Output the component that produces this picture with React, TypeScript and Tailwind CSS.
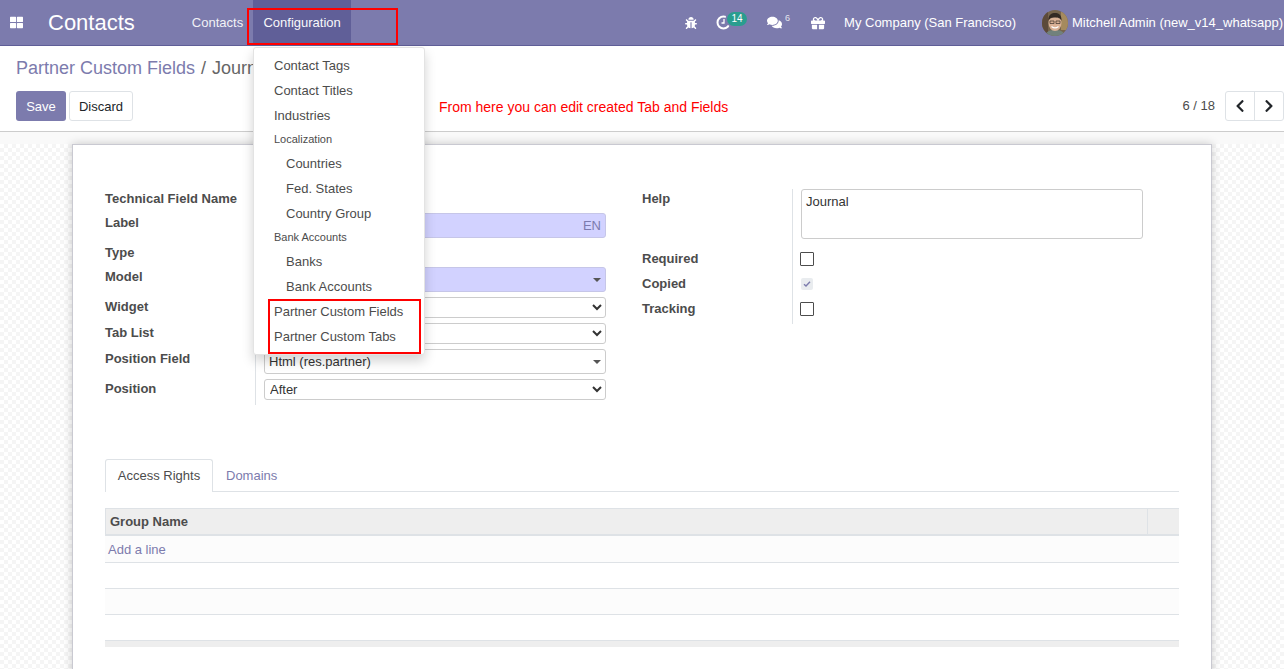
import { FaBug, FaChevronLeft, FaChevronRight, FaComments, FaGift, FaThLarge } from 'react-icons/fa';

const menuItems = [
    { label: 'Contact Tags' },
    { label: 'Contact Titles' },
    { label: 'Industries' },
    { label: 'Localization', header: true },
    { label: 'Countries', sub: true },
    { label: 'Fed. States', sub: true },
    { label: 'Country Group', sub: true },
    { label: 'Bank Accounts', header: true },
    { label: 'Banks', sub: true },
    { label: 'Bank Accounts', sub: true },
    { label: 'Partner Custom Fields' },
    { label: 'Partner Custom Tabs' },
];

const Caret = () => (
    <span className="absolute right-[4px] top-1/2 -translate-y-1/2 border-x-[4px] border-t-[4px] border-x-transparent border-t-[#555]" />
);

function Label({ children, height }: { children: React.ReactNode; height: string }) {
    return <div className={`${height} w-[150px] pr-2 font-bold leading-[20px] text-[#4c4c4c]`}>{children}</div>;
}

function NativeSelect({ value }: { value?: string }) {
    return (
        <select className="block h-[21px] w-full rounded-[3px] border border-[#ccc] bg-white pl-[1px] text-[13px] text-[#333]" defaultValue={value}>
            <option>{value ?? ''}</option>
        </select>
    );
}

function Avatar() {
    return (
        <svg width="26" height="26" viewBox="0 0 26 26" className="rounded-full">
            <rect width="26" height="26" fill="#76644c" />
            <rect x="0" y="0" width="6" height="26" fill="#5c4a3a" />
            <rect x="19" y="2" width="7" height="18" fill="#a58a5e" />
            <path d="M3 26c1-5 5-6 10-6s9 1 10 6z" fill="#71817c" />
            <ellipse cx="13" cy="13" rx="6.500" ry="8" fill="#d9b196" />
            <path d="M6.500 11c-.5-6.500 3.500-8 6.500-8s7 1.500 6.500 8c-1-3-3.500-3.500-6.500-3.500s-5.500 .5-6.500 3.500z" fill="#332a24" />
            <path d="M8 11h4v2.500H8zM14 11h4v2.500h-4z" fill="none" stroke="#3a3029" strokeWidth="0.7" />
            <path d="M9.500 16.500c2.500 2 4.500 2 7 0" fill="none" stroke="#fff" strokeWidth="1.100" />
        </svg>
    );
}

function Checkbox() {
    return <div className="-ml-[1px] h-[14px] w-[14px] rounded-[1px] border-[1.5px] border-[#4c4c4c] bg-white" />;
}

export default function App() {
    return (
        <div className="relative flex h-screen flex-col overflow-hidden bg-white font-['Liberation_Sans',Arial,sans-serif] text-[13px] text-[#4c4c4c]">
            {/* navbar */}
            <header className="flex h-[46px] shrink-0 items-center border-b border-[#5f5e97] bg-[#7c7bad] text-white">
                <FaThLarge className="ml-[10px] text-[13px]" />
                <span className="ml-[25px] text-[22px]">Contacts</span>
                <nav className="ml-[57px] flex h-full items-center">
                    <span className="opacity-90">Contacts</span>
                    <span className="ml-[10px] flex h-full w-[98px] items-center justify-center bg-[#5f5e97] opacity-95">Configuration</span>
                </nav>
                <div className="ml-auto flex h-full items-center whitespace-nowrap pr-[1px]">
                    <FaBug className="text-[12px]" />
                    <span className="relative ml-[19px] flex items-center">
                        <svg width="15" height="15" viewBox="0 0 15 15">
                            <circle cx="7.500" cy="7.500" r="6" fill="none" stroke="#fff" strokeWidth="2" />
                            <path d="M8 4v4H5.500" fill="none" stroke="#fff" strokeWidth="1.300" />
                        </svg>
                        <span className="absolute left-[11px] top-[-3px] w-[20px] rounded-[7px] bg-[#2a9d8f] text-center text-[10px] leading-[14px] shadow-[0_0_0_1.500px_#7c7bad]">14</span>
                    </span>
                    <span className="ml-[36px] flex items-center">
                        <FaComments className="text-[15px]" />
                        <span className="mb-[7px] ml-[3px] text-[9px] opacity-80">6</span>
                    </span>
                    <FaGift className="ml-[21px] text-[14px]" />
                    <span className="ml-[19px]">My Company (San Francisco)</span>
                    <span className="ml-[26px] flex items-center">
                        <Avatar />
                        <span className="ml-[4px]">Mitchell Admin (new_v14_whatsapp)</span>
                    </span>
                </div>
            </header>

            {/* control panel */}
            <div className="h-[86px] shrink-0 border-b border-[#ccc] bg-white pl-4 pt-[10px]">
                <div className="flex h-[25px] items-center text-[18px]">
                    <span className="text-[#7c7bad]">Partner Custom Fields</span>
                    <span className="mx-[6px] text-[#666]">/</span>
                    <span className="text-[#666]">Journal</span>
                </div>
                <div className="mt-[10px] flex h-[30px] items-center">
                    <button className="h-[30px] w-[50px] rounded-[3px] bg-[#7c7bad] pt-[1px] text-white">Save</button>
                    <button className="ml-[3px] h-[30px] w-[64px] rounded-[3px] border border-[#dee2e6] bg-white pt-[1px] text-[#212529]">Discard</button>
                    <span className="ml-[306px] pt-[2px] text-[14px] text-[#ff0000]">From here you can edit created Tab and Fields</span>
                    <span className="ml-auto text-[#4c4c4c]">6 / 18</span>
                    <div className="ml-[10px] flex h-[30px] w-[59px] rounded-[3px] border border-[#dee2e6] text-[#212529]">
                        <span className="flex w-[29px] items-center justify-center border-r border-[#dee2e6]"><FaChevronLeft className="text-[14px]" /></span>
                        <span className="flex flex-1 items-center justify-center"><FaChevronRight className="text-[14px]" /></span>
                    </div>
                </div>
            </div>

            {/* form view */}
            <div className="h-[12px] shrink-0 bg-[#f9f9f9]" />
            <main className="min-h-0 flex-1 bg-[repeating-conic-gradient(#f5f5f5_0_25%,#ffffff_0_50%)] bg-[length:8px_8px] pl-[72px]">
                <div className="h-[600px] w-[1140px] border border-[#c9c9d1] bg-white px-[32px] pt-[44px] shadow-[0_0_9px_rgba(0,0,0,0.2)]">
                    <div className="flex gap-[36px]">
                        <div className="flex w-[501px]">
                            <div>
                                <Label height="h-[24px]">Technical Field Name</Label>
                                <Label height="h-[30px]">Label</Label>
                                <Label height="h-[24px]">Type</Label>
                                <Label height="h-[30px]">Model</Label>
                                <Label height="h-[26px]">Widget</Label>
                                <Label height="h-[26px]">Tab List</Label>
                                <Label height="h-[30px]">Position Field</Label>
                                <Label height="h-[26px]">Position</Label>
                            </div>
                            <div className="flex-1 border-l border-[#dee2e6] pl-2">
                                <div className="h-[24px]" />
                                <div className="h-[30px]">
                                    <div className="flex h-[25px] items-center justify-end rounded-[3px] border border-[#c6c6e8] bg-[#d2d2ff] pr-1 text-[#7c7bad]">EN</div>
                                </div>
                                <div className="h-[24px]" />
                                <div className="h-[30px]">
                                    <div className="relative h-[25px] rounded-[3px] border border-[#c6c6e8] bg-[#d2d2ff]"><Caret /></div>
                                </div>
                                <div className="h-[26px]"><NativeSelect /></div>
                                <div className="h-[26px]"><NativeSelect /></div>
                                <div className="h-[30px]">
                                    <div className="relative flex h-[25px] items-center rounded-[3px] border border-[#ccc] pl-1 text-[#333]">
                                        Html (res.partner)
                                        <Caret />
                                    </div>
                                </div>
                                <div className="h-[26px]"><NativeSelect value="After" /></div>
                            </div>
                        </div>
                        <div className="flex h-[135px] w-[501px]">
                            <div>
                                <Label height="h-[60px]">Help</Label>
                                <Label height="h-[25px]">Required</Label>
                                <Label height="h-[25px]">Copied</Label>
                                <Label height="h-[25px]">Tracking</Label>
                            </div>
                            <div className="flex-1 border-l border-[#dee2e6] pl-2">
                                <div className="h-[60px]">
                                    <div className="h-[50px] rounded-[3px] border border-[#ccc] px-1 py-[2px] text-[#333]">Journal</div>
                                </div>
                                <div className="flex h-[25px] items-start pt-[3px]"><Checkbox /></div>
                                <div className="flex h-[25px] items-start pt-[4px]">
                                    <div className="flex h-[12px] w-[12px] items-center justify-center rounded-[2px] bg-[#e9ecef]">
                                        <svg width="8" height="8" viewBox="0 0 8 8"><path d="M1 4.200 3 6 7 1.800" fill="none" stroke="#7c7bad" strokeWidth="1.400" /></svg>
                                    </div>
                                </div>
                                <div className="flex h-[25px] items-start pt-[3px]"><Checkbox /></div>
                            </div>
                        </div>
                    </div>

                    {/* tabs */}
                    <div className="mt-[54px] flex h-[33px] border-b border-[#dee2e6]">
                        <div className="flex h-[33px] w-[108px] items-center justify-center rounded-t-[3px] border border-b-0 border-[#dee2e6] bg-white">Access Rights</div>
                        <div className="ml-[13px] flex items-center pt-[1px] text-[#7c7bad]">Domains</div>
                    </div>

                    {/* lines table */}
                    <div className="mt-[16px]">
                        <div className="flex h-[28px] border-t border-b-2 border-[#dee2e6] bg-[#eeeeee] font-bold">
                            <div className="flex flex-1 items-center border-x border-[#dee2e6] pl-1">Group Name</div>
                            <div className="w-[31px]" />
                        </div>
                        <div className="flex h-[27px] items-center border-b border-[#dee2e6] bg-[#fcfcfc] pl-[3px] pt-[1px] text-[#7c7bad]">Add a line</div>
                        <div className="h-[26px] border-b border-[#dee2e6]" />
                        <div className="h-[26px] border-b border-[#dee2e6] bg-[#fcfcfc]" />
                        <div className="h-[26px] border-b border-[#dee2e6]" />
                        <div className="h-[6px] bg-[#eeeeee]" />
                    </div>
                </div>
            </main>

            {/* open dropdown */}
            <div className="absolute left-[253px] top-[47px] w-[172px] rounded-[3px] border border-[#e3e3e3] bg-white pb-[5px] pt-[5px] text-[#4c4c4c] shadow-[0_6px_12px_rgba(0,0,0,0.175)]">
                {menuItems.map((item, i) => (
                    <div
                        key={i}
                        className={
                            item.header
                                ? 'flex h-[23px] items-center pl-5 text-[11px]'
                                : item.sub
                                ? 'flex h-[25px] items-center pl-8'
                                : 'flex h-[25px] items-center pl-5'
                        }
                    >
                        {item.label}
                    </div>
                ))}
            </div>

            {/* red annotation boxes */}
            <div className="pointer-events-none absolute left-[247px] top-[8px] h-[37px] w-[151px] border-2 border-[#ff0000]" />
            <div className="pointer-events-none absolute left-[268px] top-[299px] h-[55px] w-[153px] border-2 border-[#ff0000]" />
        </div>
    );
}
